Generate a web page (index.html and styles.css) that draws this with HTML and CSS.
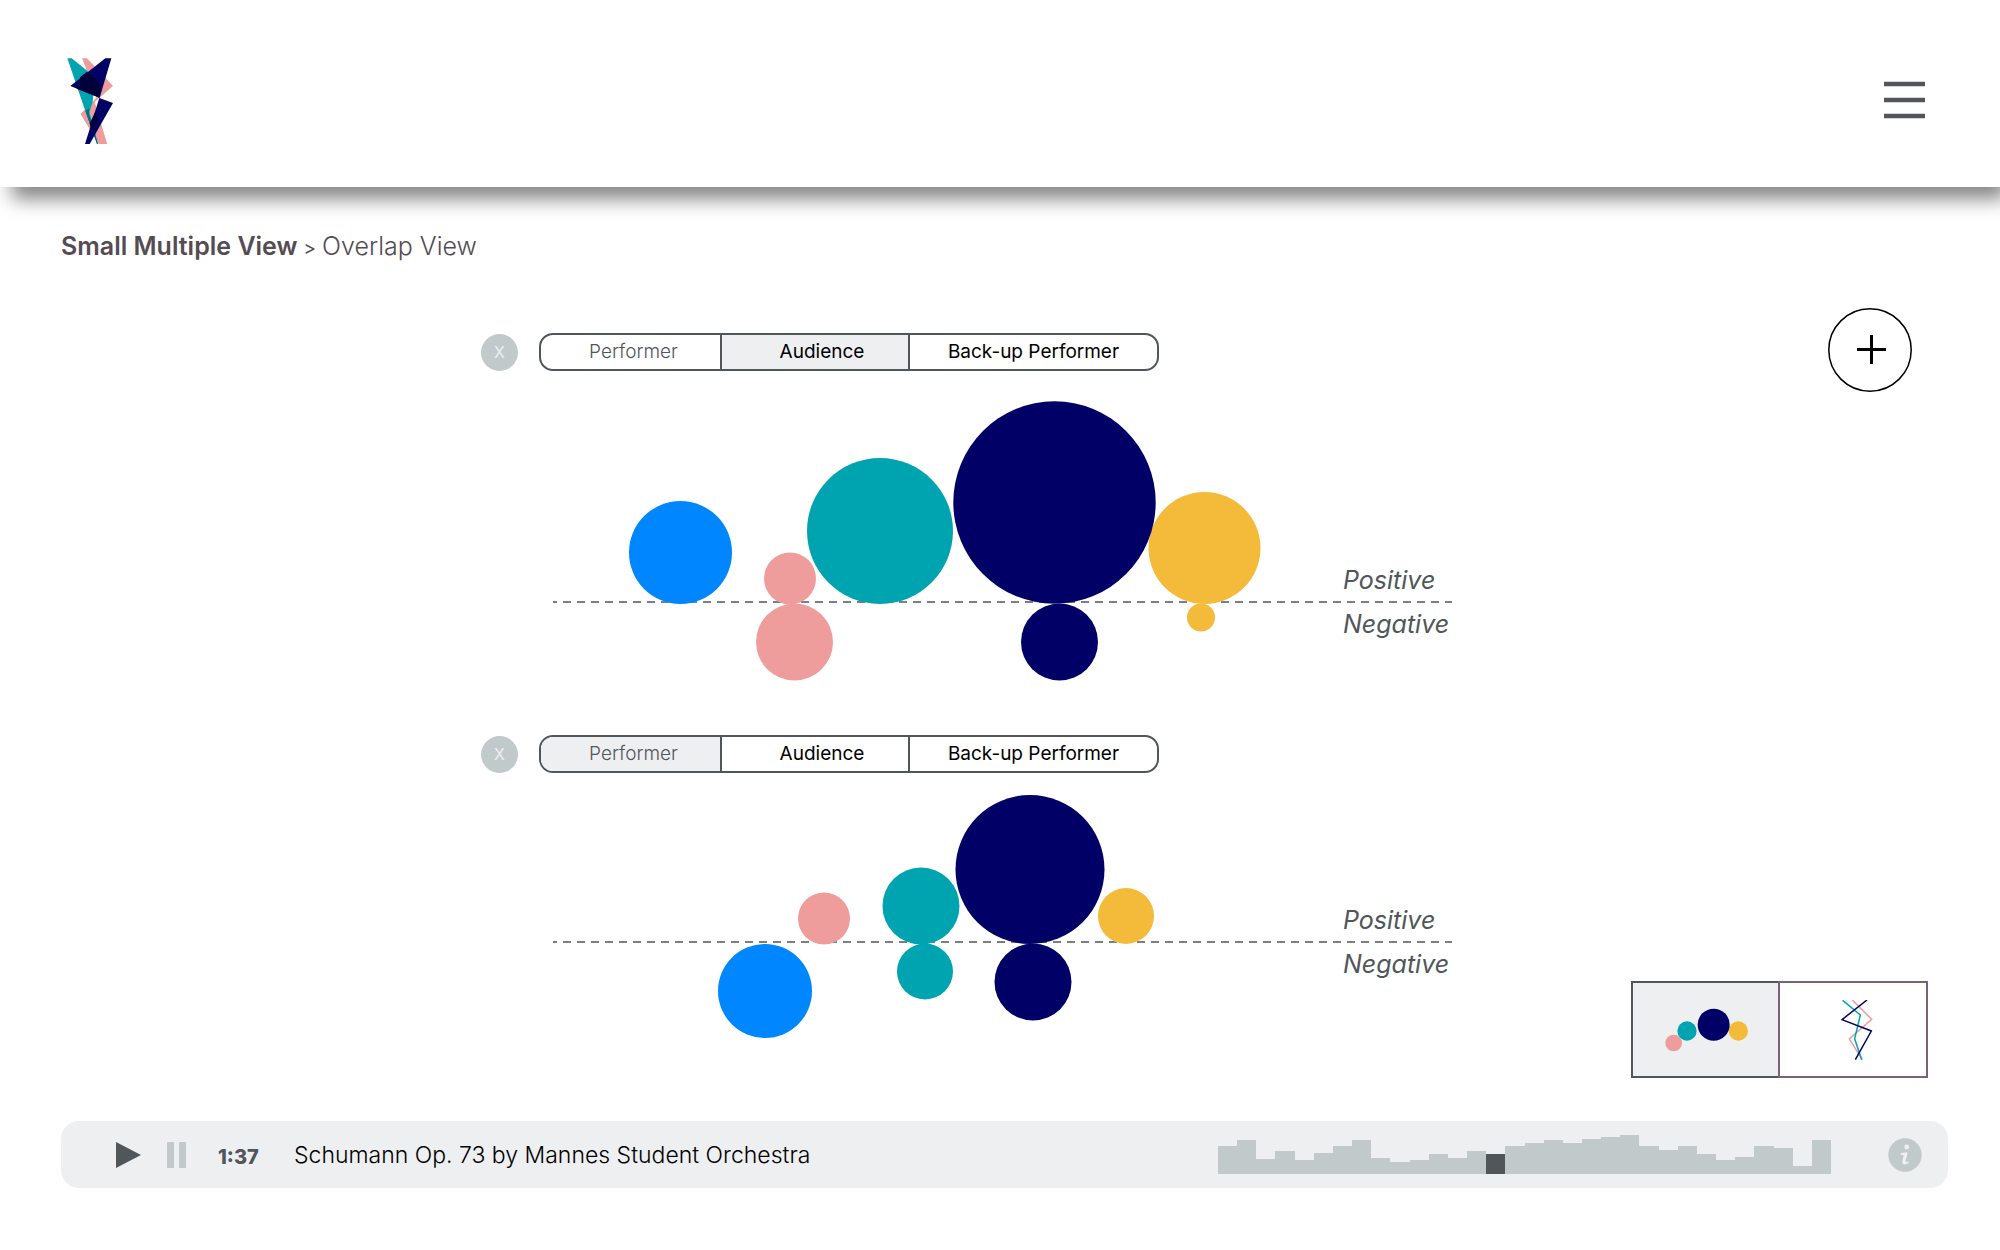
FILE: index.html
```html
<!DOCTYPE html>
<html lang="en">
<head>
<meta charset="utf-8">
<meta name="viewport" content="width=device-width, initial-scale=1">
<title>Overlap View</title>
<link rel="stylesheet" href="styles.css">
</head>
<body>
<header class="site-header">
  <a class="logo" href="#" aria-label="Home">
    <svg width="47" height="87" viewBox="51 55 141 261" aria-hidden="true">
      <path fill="#ef9c9c" d="M96 56H111L189 139 134 187 171 313H147L92 223 131 184 141 170Z"/>
      <path fill="#ef9c9c" d="M131 183L171 313H147L92 223Z"/>
      <path fill="#00a4b1" d="M52 56H65L134 111 128 187 118 217 144 313H141L106 214Z"/>
      <path fill="#006f78" d="M106 214L118 205 117 224 144 313H141Z"/>
      <path fill="#000066" d="M166 56H184L149 174 61 139Z"/>
      <path fill="#00003a" d="M91 112L110 97 134 113 149 133 155 147 148 174 80 147Z"/>
      <path fill="#000066" d="M148 175L189 190 119 313H105Z"/>
      <path fill="#00003a" d="M135 218L145 239 126 275 119 252Z"/>
    </svg>
  </a>
  <button class="menu" type="button" aria-label="Menu">
    <svg width="41" height="41" viewBox="0 0 41 41" aria-hidden="true"><path d="M0 3H41M0 19H41M0 35H41" stroke="#50565a" stroke-width="4.500"/></svg>
  </button>
</header>

<main class="page">
  <nav class="crumbs" aria-label="Breadcrumb">
    <a class="crumb-parent" href="#">Small Multiple View</a>
    <span class="crumb-sep">&gt;</span>
    <span class="crumb-current">Overlap View</span>
  </nav>

  <div class="workspace">
    <div class="charts">
      <section class="chart">
        <div class="chart-head">
          <button class="close" type="button" aria-label="Remove chart">X</button>
          <div class="tabs">
            <button class="tab tab-performer" type="button">Performer</button>
            <button class="tab tab-audience is-on" type="button">Audience</button>
            <button class="tab tab-backup" type="button">Back-up Performer</button>
          </div>
        </div>
        <svg class="plot" viewBox="0 -213 900 294" role="img" aria-label="Audience reactions">
          <line class="axis" x1="0" x2="899" y1="-2" y2="-2"/>
          <circle class="blue" cx="127.500" cy="-51.500" r="51.500"/>
          <circle class="pink" cx="237" cy="-25.500" r="26"/>
          <circle class="pink" cx="241.500" cy="38" r="38.500"/>
          <circle class="teal" cx="327" cy="-73" r="73"/>
          <circle class="yellow" cx="651.500" cy="-56" r="56"/>
          <circle class="yellow" cx="648" cy="13.500" r="14"/>
          <circle class="navy" cx="501.500" cy="-101.500" r="101.200"/>
          <circle class="navy" cx="506.500" cy="38" r="38.500"/>
          <text class="axis-label" x="790" y="-15">Positive</text>
          <text class="axis-label" x="790" y="29">Negative</text>
        </svg>
      </section>

      <section class="chart">
        <div class="chart-head">
          <button class="close" type="button" aria-label="Remove chart">X</button>
          <div class="tabs">
            <button class="tab tab-performer is-on" type="button">Performer</button>
            <button class="tab tab-audience" type="button">Audience</button>
            <button class="tab tab-backup" type="button">Back-up Performer</button>
          </div>
        </div>
        <svg class="plot" viewBox="0 -151 900 246" role="img" aria-label="Performer reactions">
          <line class="axis" x1="0" x2="899" y1="-2" y2="-2"/>
          <circle class="blue" cx="212" cy="47" r="47"/>
          <circle class="pink" cx="271" cy="-25.500" r="26"/>
          <circle class="teal" cx="368" cy="-38" r="38.500"/>
          <circle class="teal" cx="372" cy="27.500" r="28"/>
          <circle class="navy" cx="477" cy="-74.500" r="74.500"/>
          <circle class="navy" cx="480" cy="38" r="38.500"/>
          <circle class="yellow" cx="573" cy="-28" r="28"/>
          <text class="axis-label" x="790" y="-15">Positive</text>
          <text class="axis-label" x="790" y="29">Negative</text>
        </svg>
      </section>
    </div>

    <aside class="tools">
      <button class="add" type="button" aria-label="Add chart">
        <svg width="84" height="84" viewBox="0 0 84 84" aria-hidden="true">
          <circle cx="42" cy="42" r="41.200" fill="none" stroke="#000" stroke-width="1.500"/>
          <path d="M43.500 27V56M29 41.500H58" stroke="#000" stroke-width="3"/>
        </svg>
      </button>
      <div class="views">
        <button class="view view-bubbles" type="button" aria-label="Bubble view">
          <svg width="84" height="44" viewBox="135 113 252 132" aria-hidden="true">
            <circle class="pink" cx="161" cy="218" r="25"/>
            <circle class="teal" cx="201" cy="182" r="29"/>
            <circle class="yellow" cx="355" cy="182" r="29"/>
            <circle class="navy" cx="281" cy="163" r="48"/>
          </svg>
        </button>
        <button class="view view-lines" type="button" aria-label="Line view">
          <svg width="32" height="60" viewBox="665 87 96 180" fill="none" stroke-width="4.500" aria-hidden="true">
            <path stroke="#ef9c9c" d="M699 87L757 145 690 204 729 266"/>
            <path stroke="#00a4b1" d="M670 88L723 132 706 203 727 266"/>
            <path stroke="#000066" d="M743 87L668 146 756 180 708 266"/>
          </svg>
        </button>
      </div>
    </aside>
  </div>

  <section class="player" aria-label="Player">
    <button class="control play" type="button" aria-label="Play">
      <svg width="25" height="26" viewBox="0 0 25 26" aria-hidden="true"><path fill="#50565a" d="M0 0L25 13 0 26Z"/></svg>
    </button>
    <button class="control pause" type="button" aria-label="Pause">
      <svg width="19" height="26" viewBox="0 0 19 26" aria-hidden="true"><path fill="#c2c9ca" d="M0 0H7V26H0ZM12 0H19V26H12Z"/></svg>
    </button>
    <span class="time">1:37</span>
    <span class="track">Schumann Op. 73 by Mannes Student Orchestra</span>
    <div class="wave">
      <i class="bar" style="height:28px"></i><i class="bar" style="height:34px"></i><i class="bar" style="height:15px"></i><i class="bar" style="height:23px"></i>
      <i class="bar" style="height:14px"></i><i class="bar" style="height:21px"></i><i class="bar" style="height:28px"></i><i class="bar" style="height:34px"></i>
      <i class="bar" style="height:16px"></i><i class="bar" style="height:12px"></i><i class="bar" style="height:14px"></i><i class="bar" style="height:20px"></i>
      <i class="bar" style="height:16px"></i><i class="bar" style="height:23px"></i><i class="bar bar-now" style="height:20px"></i><i class="bar" style="height:28px"></i>
      <i class="bar" style="height:31px"></i><i class="bar" style="height:34px"></i><i class="bar" style="height:31px"></i><i class="bar" style="height:35px"></i>
      <i class="bar" style="height:37px"></i><i class="bar" style="height:39px"></i><i class="bar" style="height:28px"></i><i class="bar" style="height:24px"></i>
      <i class="bar" style="height:28px"></i><i class="bar" style="height:20px"></i><i class="bar" style="height:14px"></i><i class="bar" style="height:17px"></i>
      <i class="bar" style="height:28px"></i><i class="bar" style="height:26px"></i><i class="bar" style="height:8px"></i><i class="bar" style="height:34px"></i>
    </div>
    <button class="control info" type="button" aria-label="Information">
      <svg width="34" height="34" viewBox="0 0 34 34" aria-hidden="true">
        <circle cx="17" cy="17" r="16.700" fill="#c2c9ca"/>
        <circle cx="18.700" cy="9" r="2.400" fill="#eeeff1"/>
        <path d="M12.500 15.200L18.300 14.200Q19.800 14.200 19.400 16L17.600 22.800Q17.400 24.500 20.600 23.600L20.300 25.600Q14 27.800 14.300 23.800L15.600 17.400Q15.600 16.600 12.600 16.800Z" fill="#eeeff1"/>
      </svg>
    </button>
  </section>
</main>
</body>
</html>
```
FILE: styles.css
```css
* { box-sizing: border-box; }

body {
  margin: 0;
  background: #fff;
  color: #000;
  font-family: Inter, "Liberation Sans", sans-serif;
}

button {
  margin: 0;
  padding: 0;
  border: 0;
  background: none;
  color: inherit;
  font: inherit;
  cursor: pointer;
}

svg { display: block; }

.blue { fill: #0086ff; }
.pink { fill: #ef9c9c; }
.teal { fill: #00a4b1; }
.navy { fill: #000066; }
.yellow { fill: #f4bb3b; }

.site-header {
  display: flex;
  align-items: center;
  justify-content: space-between;
  height: 187px;
  padding: 16px 75px 0 67px;
  background: #fff;
  box-shadow: 9px 15px 18px -3px rgba(0, 0, 0, 0.48);
}

.page { padding: 43px 52px 62px 61px; }

.crumbs {
  display: flex;
  align-items: baseline;
  gap: 6px;
  font-size: 25px;
  line-height: 32px;
  color: #554b53;
}

.crumb-parent {
  color: inherit;
  font-weight: 600;
  text-decoration: none;
}

.crumb-sep { font-size: 19px; }
.crumb-current { font-weight: 300; }

.workspace {
  display: grid;
  grid-template-columns: minmax(0, 972px) 300px;
  justify-content: space-between;
  margin-top: 43px;
  padding: 0 20px 0 420px;
}

.charts {
  display: flex;
  flex-direction: column;
  gap: 50px;
  padding: 25px 0 39px;
}

.chart-head {
  display: flex;
  align-items: center;
  gap: 21px;
  margin-bottom: 20px;
}

.close {
  width: 37px;
  height: 37px;
  border-radius: 50%;
  background: #c2c9ca;
  color: #eeeff1;
  font-size: 16px;
}

.tabs {
  display: grid;
  grid-template-columns: 179px 188px 249px;
  height: 38px;
  overflow: hidden;
  border: 2px solid #50565a;
  border-radius: 14px;
}

.tab {
  font-size: 19px;
  line-height: 20px;
}

.tab + .tab { border-left: 2px solid #50565a; }
.tab-performer { padding-left: 6px; color: #50565a; font-weight: 300; }
.tab-audience { padding-left: 14px; }
.is-on { background: #eeeff1; }

.plot {
  width: calc(100% - 72px);
  margin-left: 72px;
}

.axis {
  stroke: #50565a;
  stroke-width: 1.500;
  stroke-dasharray: 8 6;
  stroke-dashoffset: 4;
}

.axis-label {
  fill: #50565a;
  font-size: 25px;
  font-style: italic;
}

.tools {
  display: flex;
  flex-direction: column;
  align-items: flex-end;
  justify-content: space-between;
}

.add { margin-right: 16px; }

.views { display: flex; }

.view {
  display: flex;
  align-items: center;
  height: 97px;
}

.view-bubbles {
  width: 147px;
  padding-left: 32px;
  background: #eeeff1;
  border: 2px solid #50565a;
  border-right: 0;
}

.view-lines {
  justify-content: center;
  width: 150px;
  padding-left: 8px;
  border: 2px solid #7d6077;
}

.player {
  display: flex;
  align-items: center;
  height: 67px;
  margin-top: 43px;
  padding: 0 26px 0 55px;
  border-radius: 18px;
  background: #eeeff1;
}

.pause { margin-left: 26px; }

.time {
  width: 76px;
  margin-left: 32px;
  padding-top: 4px;
  color: #50565a;
  font-size: 20px;
  font-weight: 800;
}

.track {
  font-size: 23px;
  font-weight: 300;
}

.wave {
  display: flex;
  align-items: flex-end;
  width: 613px;
  height: 39px;
  margin: 0 57px 0 auto;
}

.bar {
  flex: 1;
  background: #c2c9ca;
}

.bar-now { background: #50565a; }
```
